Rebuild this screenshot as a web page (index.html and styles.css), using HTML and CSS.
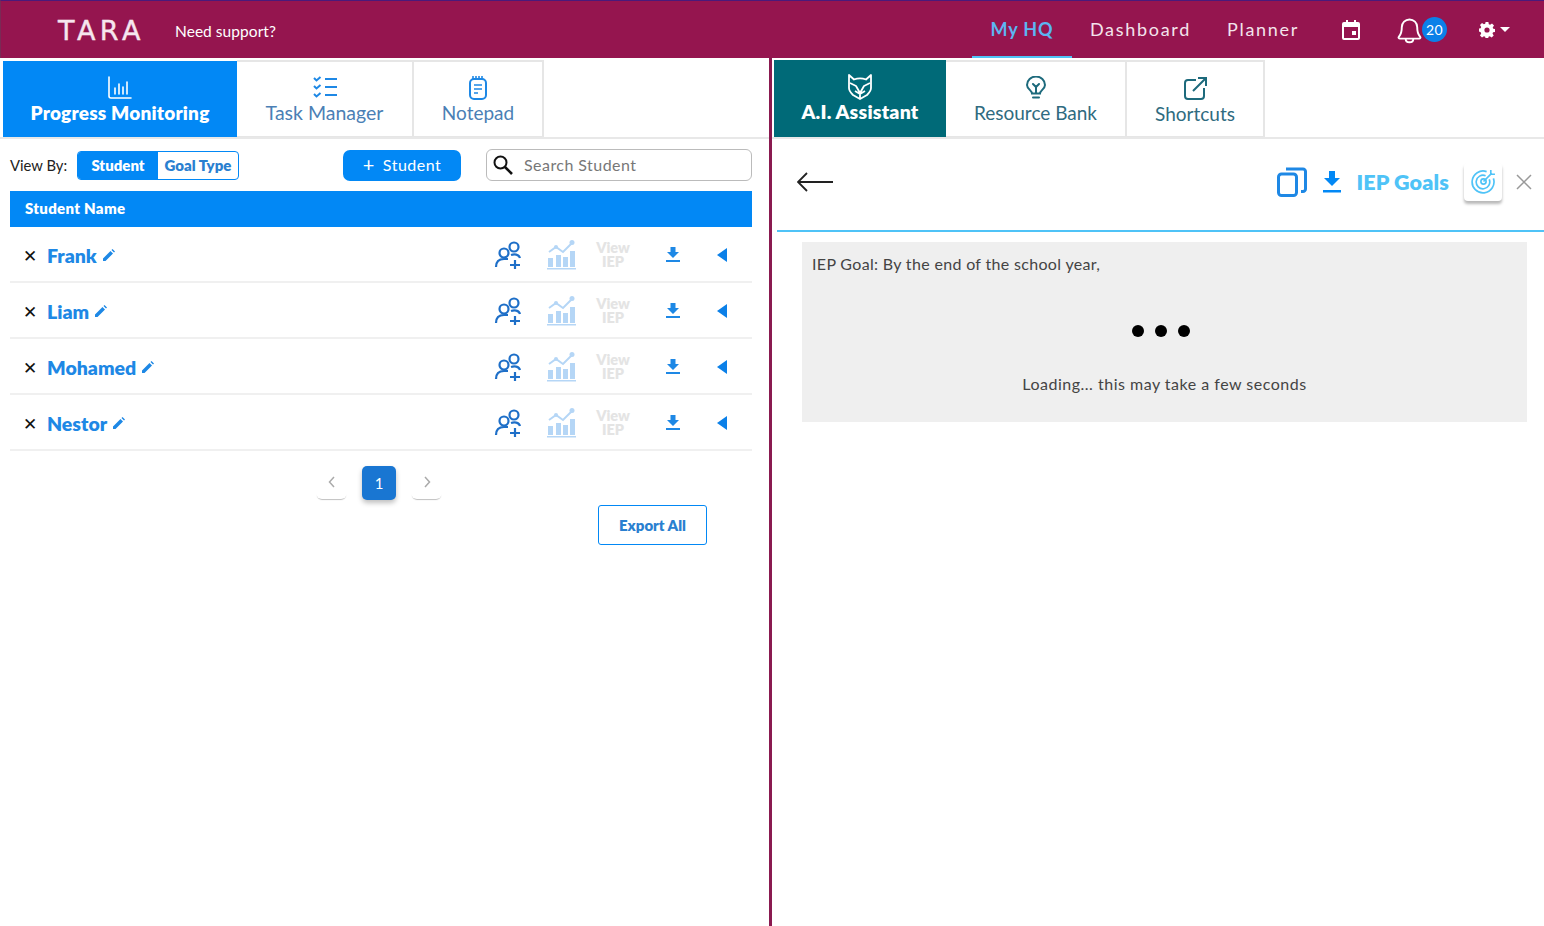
FILE: index.html
```html
<!DOCTYPE html>
<html lang="en">
<head>
    <meta charset="UTF-8">
    <title>TARA</title>
    <link rel="stylesheet" href="styles.css">
</head>
<body>
    <svg class="icon-defs">
        <symbol id="i-pencil" viewBox="0 0 12 12"><path fill="#1e88e5" d="M0 12V9.500L7.500 2 10 4.500 2.500 12zM8.500 1l1-1L12 2.500l-1 1z"/></symbol>
        <symbol id="i-people" viewBox="0 0 28 28"><g fill="none" stroke="#1e6fc8" stroke-width="2.200"><circle cx="10" cy="12" r="4.500"/><circle cx="20" cy="6" r="4.500"/><path d="M2 26c0-6 3-8 8-8h4M17 14c3-1 8-1 9 3M16 24h10M21 19v9"/></g></symbol>
        <symbol id="i-chart" viewBox="0 0 30 30"><path fill="#b5d6f6" d="M2 18h5v9H2zM10 15h5v12h-5zM17 17h5v10h-5zM24 11h5v16h-5zM1 28h29v1.500H1z"/><path fill="none" stroke="#b5d6f6" stroke-width="2" d="M3 12l7-5 7 5 9-9"/><circle cx="10" cy="7" r="2" fill="#b5d6f6"/><circle cx="26" cy="2.500" r="2.500" fill="#b5d6f6"/></symbol>
        <symbol id="i-dl" viewBox="0 0 14 15"><path fill="#1e88e5" d="M4.500 0h5v5H13L7 11 1 5h3.500zM0 13h14v2H0z"/></symbol>
    </svg>

    <header class="topbar">
        <div class="brand">TARA</div>
        <a class="support">Need support?</a>
        <nav class="topnav">
            <a class="topnav-item active">My HQ</a>
            <a class="topnav-item">Dashboard</a>
            <a class="topnav-item">Planner</a>
        </nav>
        <svg class="cal-icon" viewBox="0 0 18 20" width="18" height="20">
            <path fill="#fff" d="M2 2h2V0h2v2h6V0h2v2h2a2 2 0 0 1 2 2v14a2 2 0 0 1-2 2H2a2 2 0 0 1-2-2V4a2 2 0 0 1 2-2zm0 5v11h14V7H2zm8 4h4v4h-4v-4z"/>
        </svg>
        <div class="bell">
            <svg viewBox="0 0 26 28" width="25" height="28">
                <path fill="none" stroke="#fff" stroke-width="2" d="M2 21c2-2 3-4 3-10a8 8 0 0 1 16 0c0 6 1 8 3 10 1 1 0 2-1 2H3c-1 0-2-1-1-2zM9 23c0 5 8 5 8 0"/>
            </svg>
            <span class="badge">20</span>
        </div>
        <svg class="gear" viewBox="0 0 16 16" width="16" height="16">
            <path fill="#fff" fill-rule="evenodd" d="M6.600 0h2.800l.4 2.200 1.300.6 1.900-1.300 2 2-1.300 1.900.6 1.300 1.700.4v2.800l-1.900.4-.6 1.300 1.200 1.900-2 2-1.900-1.200-1.300.5-.4 2.200H6.600l-.4-2.200-1.300-.5-1.900 1.200-2-2 1.200-1.900-.5-1.300L0 9.400V6.600l1.700-.4.5-1.300L1 3l2-2 1.900 1.300 1.300-.6zM8 5.400a2.600 2.600 0 1 0 0 5.200 2.600 2.600 0 0 0 0-5.200z"/>
        </svg>
        <span class="caret"></span>
    </header>

    <main class="panes">
        <section class="pane pane-left">
            <div class="tabs tabs-left">
                <a class="tab tab-progress active">
                    <svg viewBox="0 0 24 24" width="24" height="24" fill="none" stroke="#fff" stroke-width="1.600" stroke-linecap="round">
                        <path d="M1 1v19q0 2 2 2h20M7 12v6M11 8v10M15 11v7M19 6v12"/>
                    </svg>
                    <span>Progress Monitoring</span>
                </a>
                <a class="tab tab-task">
                    <svg viewBox="0 0 24 22" width="24" height="22" fill="none" stroke="#1e88e5" stroke-width="2">
                        <path d="M1 2l2.500 2.500L7.500 1M1 10l2.500 2.500L7.500 9M1 18l2.500 2.500L7.500 17M12 3h12M12 11h12M12 19h12"/>
                    </svg>
                    <span>Task Manager</span>
                </a>
                <a class="tab tab-notepad">
                    <svg viewBox="0 0 18 24" width="18" height="24" fill="none" stroke="#1e88e5" stroke-width="2">
                        <rect x="1" y="3" width="16" height="20" rx="4"/>
                        <path d="M5 9h8M5 13h8M5 17h4M4 0v3M7 0v3M10 0v3M13 0v3" stroke-width="1.600"/>
                    </svg>
                    <span>Notepad</span>
                </a>
            </div>

            <div class="toolbar">
                <span class="view-label">View By:</span>
                <div class="toggle">
                    <span class="toggle-on">Student</span>
                    <span class="toggle-off">Goal Type</span>
                </div>
                <button class="add-btn"><span class="plus">+</span>Student</button>
                <div class="search">
                    <svg viewBox="0 0 20 20" width="20" height="20" fill="none" stroke="#111" stroke-width="2">
                        <circle cx="7.500" cy="7.500" r="6"/>
                        <path d="M12 12l7 7" stroke-width="2.600"/>
                    </svg>
                    <span>Search Student</span>
                </div>
            </div>

            <div class="student-table">
                <div class="table-head">Student Name</div>

                <div class="row">
                    <div class="name-cell"><span class="remove">&#10005;</span><a class="name">Frank</a><svg class="pencil"><use href="#i-pencil"/></svg></div>
                    <div class="cell"><svg class="people"><use href="#i-people"/></svg></div>
                    <div class="cell"><svg class="chart"><use href="#i-chart"/></svg></div>
                    <div class="cell"><span class="view-iep">View<br>IEP</span></div>
                    <div class="cell"><svg class="dl"><use href="#i-dl"/></svg></div>
                    <div class="cell"><span class="tri"></span></div>
                </div>

                <div class="row">
                    <div class="name-cell"><span class="remove">&#10005;</span><a class="name">Liam</a><svg class="pencil"><use href="#i-pencil"/></svg></div>
                    <div class="cell"><svg class="people"><use href="#i-people"/></svg></div>
                    <div class="cell"><svg class="chart"><use href="#i-chart"/></svg></div>
                    <div class="cell"><span class="view-iep">View<br>IEP</span></div>
                    <div class="cell"><svg class="dl"><use href="#i-dl"/></svg></div>
                    <div class="cell"><span class="tri"></span></div>
                </div>

                <div class="row">
                    <div class="name-cell"><span class="remove">&#10005;</span><a class="name">Mohamed</a><svg class="pencil"><use href="#i-pencil"/></svg></div>
                    <div class="cell"><svg class="people"><use href="#i-people"/></svg></div>
                    <div class="cell"><svg class="chart"><use href="#i-chart"/></svg></div>
                    <div class="cell"><span class="view-iep">View<br>IEP</span></div>
                    <div class="cell"><svg class="dl"><use href="#i-dl"/></svg></div>
                    <div class="cell"><span class="tri"></span></div>
                </div>

                <div class="row">
                    <div class="name-cell"><span class="remove">&#10005;</span><a class="name">Nestor</a><svg class="pencil"><use href="#i-pencil"/></svg></div>
                    <div class="cell"><svg class="people"><use href="#i-people"/></svg></div>
                    <div class="cell"><svg class="chart"><use href="#i-chart"/></svg></div>
                    <div class="cell"><span class="view-iep">View<br>IEP</span></div>
                    <div class="cell"><svg class="dl"><use href="#i-dl"/></svg></div>
                    <div class="cell"><span class="tri"></span></div>
                </div>
            </div>

            <div class="pager">
                <span class="page-btn">
                    <svg viewBox="0 0 8 12" width="8" height="12" fill="none" stroke="#aaa" stroke-width="1.500"><path d="M6 1L1.500 6 6 11"/></svg>
                </span>
                <span class="page-num">1</span>
                <span class="page-btn">
                    <svg viewBox="0 0 8 12" width="8" height="12" fill="none" stroke="#aaa" stroke-width="1.500"><path d="M2 1l4.500 5L2 11"/></svg>
                </span>
            </div>

            <div class="export-wrap">
                <button class="export">Export All</button>
            </div>
        </section>

        <section class="pane pane-right">
            <div class="tabs tabs-right">
                <a class="tab tab-ai active">
                    <svg viewBox="0 0 26 26" width="26" height="26" fill="none" stroke="#fff" stroke-width="1.800" stroke-linejoin="round">
                        <path d="M2 1l5 4.500c4-1.500 8-1.500 12 0L24 1v13c0 3-2 5-4 7l-7 4-7-4c-2-2-4-4-4-7z"/>
                        <path d="M3 9l6 3 4 7 4-7 6-3M8 17l5 3 5-3M13 20v4"/>
                    </svg>
                    <span>A.I. Assistant</span>
                </a>
                <a class="tab tab-bank">
                    <svg viewBox="0 0 20 24" width="20" height="24" fill="none" stroke="#1d6a7c" stroke-width="2">
                        <path d="M6 17.500c0-3-5-4.500-5-8.500a9 8.500 0 0 1 18 0c0 4-5 5.500-5 8.500zM10 17v-6M7 8l3 3 3-3M7 21.500h6" stroke-linecap="round"/>
                    </svg>
                    <span>Resource Bank</span>
                </a>
                <a class="tab tab-shortcut">
                    <svg viewBox="0 0 23 23" width="23" height="23" fill="none" stroke="#1d6a7c" stroke-width="2">
                        <path d="M12 3H4a3 3 0 0 0-3 3v13a3 3 0 0 0 3 3h13a3 3 0 0 0 3-3v-8M9 14L21 2M14 1h8v8"/>
                    </svg>
                    <span>Shortcuts</span>
                </a>
            </div>

            <div class="goal-head">
                <svg class="back" viewBox="0 0 36 20" width="36" height="20" fill="none" stroke="#222" stroke-width="1.800">
                    <path d="M36 10H2M10 1l-9 9 9 9"/>
                </svg>
                <svg class="copy" viewBox="0 0 30 30" width="30" height="30" fill="none" stroke="#1e88e5" stroke-width="3">
                    <rect x="1.500" y="7" width="18" height="21.500" rx="3"/>
                    <path d="M9 2h17a2.500 2.500 0 0 1 2.500 2.500V22a2.500 2.500 0 0 1-2.500 2.500h-2"/>
                </svg>
                <svg class="goal-dl" viewBox="0 0 18 22" width="18" height="22">
                    <path fill="#0288f5" d="M6 0h6v7h5l-8 8-8-8h5zM0 19h18v2.500H0z"/>
                </svg>
                <span class="goal-title">IEP Goals</span>
                <span class="target-card">
                    <svg viewBox="0 0 24 24" width="25" height="25" fill="none" stroke="#4fc3f7" stroke-width="1.600">
                        <path d="M15 2.500a10.500 10.500 0 1 0 6.500 6.500M14 6.500a6.500 6.500 0 1 0 3.500 3.500"/>
                        <circle cx="12" cy="12" r="2.500"/>
                        <path d="M12 12l8-8M19 1v4h4"/>
                    </svg>
                </span>
                <svg class="close" viewBox="0 0 16 16" width="16" height="16" fill="none" stroke="#999" stroke-width="1.500">
                    <path d="M1 1l14 14M15 1L1 15"/>
                </svg>
            </div>

            <div class="goal-body">
                <div class="goal-box">
                    <p class="goal-text">IEP Goal: By the end of the school year,</p>
                    <div class="dots"><i></i><i></i><i></i></div>
                    <p class="loading">Loading... this may take a few seconds</p>
                </div>
            </div>
        </section>
    </main>
</body>
</html>
```

FILE: styles.css
```css
* {
    box-sizing: border-box;
}

body {
    margin: 0;
    height: 926px;
    overflow: hidden;
    background-color: #fff;
    font-family: Lato, "Open Sans", sans-serif;
    color: #222;
}

.icon-defs {
    display: none;
}

/* top bar */
.topbar {
    height: 58px;
    background-color: #95154f;
    border-top: 1px solid #4a1a7a;
    border-left: 1px solid #7a2a55;
    display: flex;
    align-items: center;
    color: #fff;
}

.brand {
    margin: 2px 0 0 57px;
    width: 117px;
    font-family: "DejaVu Sans", sans-serif;
    font-size: 27px;
    letter-spacing: 4.500px;
    -webkit-text-stroke: 0.4px #f6e6ee;
    color: #f6e6ee;
}

.support {
    margin-top: 3px;
    font-size: 15.500px;
    letter-spacing: 0.050px;
}

.topnav {
    margin-left: auto;
    display: flex;
    height: 100%;
}

.topnav-item {
    display: flex;
    align-items: center;
    padding: 0 18px 2px;
    font-size: 18px;
    letter-spacing: 1.700px;
    white-space: nowrap;
    color: #f3e4ec;
}

.topnav-item.active {
    justify-content: center;
    padding: 0;
    width: 100px;
    letter-spacing: 0.800px;
    color: #5cb5f2;
    font-weight: 700;
    border-bottom: 2px solid #4fc3f7;
}

.cal-icon {
    margin-left: 25px;
}

.bell {
    margin-left: 37px;
    display: flex;
    align-items: center;
}

.badge {
    width: 25px;
    height: 25px;
    border-radius: 50%;
    background-color: #0b80e8;
    font-size: 14px;
    line-height: 25px;
    text-align: center;
    letter-spacing: 0.500px;
}

.gear {
    margin-left: 32px;
}

.caret {
    margin: 0 34px 0 5px;
    border-left: 5px solid transparent;
    border-right: 5px solid transparent;
    border-top: 5px solid #fff;
}

/* panes */
.panes {
    display: flex;
    height: 868px;
}

.pane-left {
    width: 772px;
    border-right: 3px solid #8a1a50;
    flex-shrink: 0;
}

.pane-right {
    flex: 1;
}

/* tabs */
.tabs {
    display: flex;
    height: 81px;
    border-bottom: 2px solid #e8e8e8;
}

.tabs-left {
    padding: 2px 0 0 3px;
}

.tabs-right {
    padding: 2px 0 0 2px;
}

.tab {
    display: flex;
    flex-direction: column;
    align-items: center;
    gap: 2px;
    padding-top: 13px;
    font-size: 19px;
    border: 2px solid #e6e6e6;
    border-left: 0;
    border-bottom-width: 1px;
    line-height: 24px;
}

.tab svg {
    flex-shrink: 0;
}

.tab.active {
    border: 0;
    color: #fff;
    font-weight: 800;
    letter-spacing: 0.200px;
}

.tab-progress {
    width: 234px;
    margin-top: 1px;
    padding-top: 15px;
    gap: 1px;
    background-color: #0288f5;
}

.tab-task {
    width: 177px;
    font-size: 19.500px;
    color: #4b7fb5;
}

.tab-task svg {
    margin: 1px 0;
}

.tab-notepad {
    width: 130px;
    gap: 1px;
    color: #4b7fb5;
}

.tab-notepad svg {
    margin-top: 1px;
}

.tab-ai {
    width: 172px;
    padding-top: 14px;
    gap: 0;
    font-size: 19.500px;
    background-color: #006a78;
}

.tab-bank {
    width: 181px;
    padding-top: 14px;
    gap: 1px;
    color: #2f6b80;
}

.tab-shortcut {
    width: 138px;
    padding-top: 15px;
    color: #2f6b80;
}

/* toolbar */
.toolbar {
    display: flex;
    align-items: center;
    height: 52px;
    padding: 0 17px 0 10px;
}

.view-label {
    width: 67px;
    font-size: 14.800px;
}

.toggle {
    display: flex;
    width: 162px;
    height: 29px;
    border: 1px solid #0288f5;
    border-radius: 4px;
    overflow: hidden;
    font-size: 15px;
    font-weight: 800;
    line-height: 27px;
}

.toggle-on {
    width: 80px;
    background-color: #0288f5;
    color: #fff;
    text-align: center;
}

.toggle-off {
    flex: 1;
    color: #2a80d0;
    text-align: center;
}

.add-btn {
    margin-left: 104px;
    width: 118px;
    height: 31px;
    padding-bottom: 3px;
    border: 0;
    border-radius: 7px;
    background-color: #0288f5;
    color: #fff;
    font-family: inherit;
    font-size: 16px;
    letter-spacing: 0.500px;
}

.plus {
    margin-right: 8px;
    font-size: 20px;
    vertical-align: -1px;
}

.search {
    margin-left: 25px;
    width: 266px;
    height: 32px;
    display: flex;
    align-items: center;
    gap: 11px;
    padding: 0 0 1px 6px;
    border: 1px solid #bbb;
    border-radius: 6px;
    font-size: 16px;
    letter-spacing: 0.450px;
    color: #777;
}

/* student table */
.student-table {
    margin: 0 17px 0 10px;
}

.table-head {
    height: 36px;
    padding-left: 15px;
    background-color: #0288f5;
    color: #fff;
    font-size: 15px;
    font-weight: 800;
    letter-spacing: 0.300px;
    line-height: 35px;
}

.row {
    display: grid;
    grid-template-columns: 1fr 74px 32px 72px 48px 50px;
    align-items: center;
    height: 56px;
    padding-right: 5px;
    border-bottom: 2px solid #f0f0f0;
}

.name-cell {
    display: flex;
    align-items: center;
    padding: 2px 0 0 13px;
}

.remove {
    width: 24px;
    font-size: 17px;
    color: #111;
}

.name {
    margin-right: 6px;
    font-size: 19.500px;
    font-weight: 800;
    color: #1e88e5;
}

.pencil {
    width: 12px;
    height: 12px;
}

.cell {
    display: flex;
    justify-content: center;
    align-items: center;
    padding-top: 1px;
}

.people {
    width: 28px;
    height: 28px;
}

.chart {
    width: 30px;
    height: 30px;
}

.dl {
    width: 14px;
    height: 15px;
}

.view-iep {
    font-size: 14.500px;
    font-weight: 800;
    line-height: 14px;
    text-align: center;
    color: #e4e4e4;
}

.tri {
    border-top: 7px solid transparent;
    border-bottom: 7px solid transparent;
    border-right: 10px solid #0b80e8;
}

/* pager */
.pager {
    display: flex;
    align-items: flex-start;
    gap: 15px;
    margin: 15px 0 0 316px;
}

.page-btn {
    width: 31px;
    height: 33px;
    display: flex;
    justify-content: center;
    padding-top: 10px;
    border-radius: 6px;
    background-color: #fff;
    box-shadow: 0 2px 1px -1px rgba(0, 0, 0, 0.25);
}

.page-num {
    width: 34px;
    height: 34px;
    border-radius: 5px;
    background-color: #1976d2;
    color: #fff;
    font-size: 15px;
    line-height: 34px;
    text-align: center;
    box-shadow: 0 3px 5px rgba(0, 0, 0, 0.25);
}

.export-wrap {
    margin: 5px 0 0 598px;
}

.export {
    width: 109px;
    height: 40px;
    border: 1px solid #0288f5;
    border-radius: 3px;
    background-color: #fff;
    color: #2a80d0;
    font-family: inherit;
    font-size: 15px;
    font-weight: 800;
}

/* right pane */
.goal-head {
    display: flex;
    align-items: center;
    height: 93px;
    margin-left: 5px;
    padding: 0 12px 6px 20px;
    border-bottom: 2px solid #4fc3f7;
}

.copy {
    margin-left: auto;
}

.goal-dl {
    margin-left: 16px;
}

.goal-title {
    margin-left: 15px;
    font-size: 21.500px;
    font-weight: 800;
    letter-spacing: 0.150px;
    color: #4fc3f7;
}

.target-card {
    margin-left: 15px;
    width: 38px;
    height: 38px;
    display: flex;
    justify-content: center;
    align-items: center;
    border-radius: 4px;
    box-shadow: 0 3px 3px rgba(0, 0, 0, 0.28);
}

.close {
    margin-left: 14px;
}

.goal-body {
    padding: 10px 17px 0 30px;
}

.goal-box {
    height: 180px;
    padding: 12px 10px 0;
    background-color: #efefef;
    font-size: 16px;
    color: #444;
}

.goal-text {
    margin: 0;
    letter-spacing: 0.330px;
}

.dots {
    display: flex;
    justify-content: center;
    gap: 11px;
    margin: 52px 0 0 -8px;
}

.dots i {
    width: 12px;
    height: 12px;
    border-radius: 50%;
    background-color: #000;
}

.loading {
    margin: 37px 0 0;
    letter-spacing: 0.500px;
    text-align: center;
}
```
